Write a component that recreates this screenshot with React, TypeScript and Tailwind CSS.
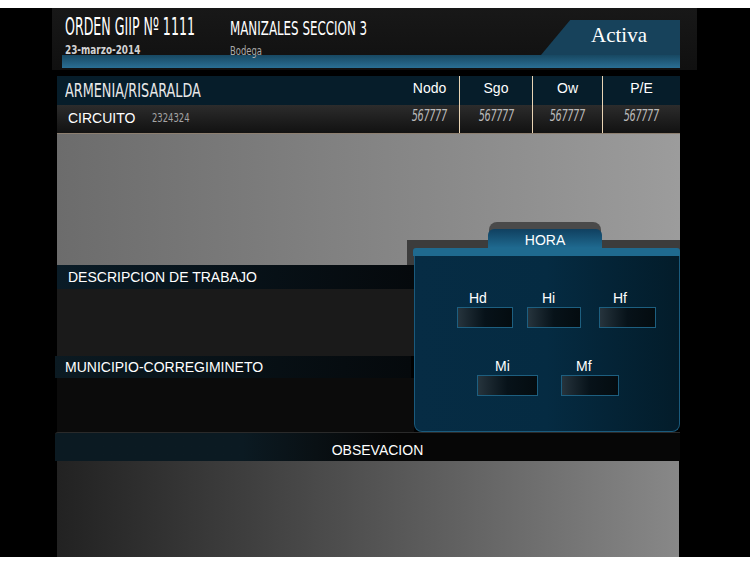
import React from "react";

const cond = "font-['DejaVu_Sans_Condensed','DejaVu_Sans',sans-serif]";
const arial = "font-['Liberation_Sans',Arial,sans-serif]";

function Squeeze({ children, className }: { children: React.ReactNode; className: string }) {
    return <span className={`inline-block origin-left whitespace-nowrap ${cond} ${className}`}>{children}</span>;
}

function Col({ label, value, w, pl }: { label: string; value: string; w: string; pl?: string }) {
    return (
        <div className={`flex flex-col ${w} ${pl ? "" : "border-l border-[#e9d4b4]"}`}>
            <div className={`h-[29px] bg-[#061d2a] flex items-center justify-center pb-[4px] ${pl ?? ""} ${arial} text-[14px] text-white`}>{label}</div>
            <div className={`h-[28px] bg-gradient-to-b from-[#2c2c2c] to-[#121212] flex items-center justify-center pb-[6px] ${pl ?? ""}`}>
                <span className={`${cond} italic text-[15px] text-[#b9b9b9] scale-x-[0.72] inline-block tracking-[-0.5px]`}>{value}</span>
            </div>
        </div>
    );
}

function TimeBox({ label, w, pl }: { label: string; w: string; pl: string }) {
    return (
        <div className="flex flex-col">
            <div className={`${arial} text-[14px] leading-[16px] text-white h-[17px] ${pl}`}>{label}</div>
            <div className={`${w} h-[21px] border border-[#1d5f80] bg-gradient-to-r from-[#26343d] via-[#071219] to-[#040c10]`}></div>
        </div>
    );
}

export default function App() {
    return (
        <div className="w-[750px] h-[580px] bg-white pt-2">
            <div className="h-[549px] bg-black pl-[52px]">
                <div className="w-[645px] flex flex-col">
                    {/* header */}
                    <div className="h-[62px] bg-gradient-to-b from-[#181818] to-[#101010] flex flex-col">
                        <div className="h-[47px] flex">
                            <div className="w-[178px] pl-[13px] pt-[6px] flex flex-col">
                                <Squeeze className="text-[25px] leading-[26px] text-white scale-x-[0.56]">ORDEN GIIP Nº 1111</Squeeze>
                                <Squeeze className="text-[13px] leading-[14px] mt-[3px] text-[#d2d2d2] scale-x-[0.76] font-bold">23-marzo-2014</Squeeze>
                            </div>
                            <div className="w-[311px] pt-[9px] flex flex-col">
                                <Squeeze className="text-[20px] leading-[22px] text-white scale-x-[0.66]">MANIZALES SECCION 3</Squeeze>
                                <Squeeze className="text-[13px] leading-[14px] mt-[5px] text-[#a9a9a9] scale-x-[0.72]">Bodega</Squeeze>
                            </div>
                            <div className="mt-auto h-[35px] w-[139px] bg-[#17425b] [clip-path:polygon(21%_0,100%_0,100%_100%,0_100%)] flex justify-end pr-[33px]">
                                <span className="font-['Liberation_Serif','DejaVu_Serif',serif] text-[21px] leading-[30px] text-white">Activa</span>
                            </div>
                        </div>
                        <div className="ml-[10px] w-[618px] h-[13px] bg-gradient-to-b from-[#174862] to-[#2b6f94]"></div>
                    </div>
                    <div className="h-[6px]"></div>

                    {/* body column */}
                    <div className="ml-[5px] w-[623px] flex flex-col">
                        <div className="flex border-b border-[#8d7f70]">
                            <div className="flex-1 flex flex-col">
                                <div className="h-[29px] bg-[#061d2a] flex items-center pl-2">
                                    <Squeeze className="text-[19px] text-[#e8e8e8] scale-x-[0.75]">ARMENIA/RISARALDA</Squeeze>
                                </div>
                                <div className="h-[28px] bg-gradient-to-b from-[#2c2c2c] to-[#121212] flex items-center pl-[11px] pb-[2px]">
                                    <span className={`${arial} text-[14px] text-white`}>CIRCUITO</span>
                                    <Squeeze className="ml-[17px] text-[12px] text-[#a5a5a5] scale-x-[0.78]">2324324</Squeeze>
                                </div>
                            </div>
                            <Col label="Nodo" value="567777" w="w-[69px]" pl="pl-[10px]" />
                            <Col label="Sgo" value="567777" w="w-[73px]" />
                            <Col label="Ow" value="567777" w="w-[70px]" />
                            <Col label="P/E" value="567777" w="w-[78px]" />
                        </div>

                        {/* gray area */}
                        <div className="h-[131px] bg-gradient-to-r from-[#6c6c6c] to-[#9c9c9c] flex flex-col">
                            <div className="flex-1"></div>
                            <div className="ml-auto w-[273px] h-[25px] bg-[#3c3c3c]"></div>
                        </div>

                        {/* middle */}
                        <div className="flex">
                            <div className="w-[357px] flex flex-col">
                                <div className={`h-[24px] bg-gradient-to-r from-[#0a1c27] to-[#05090c] flex items-center pl-[11px] ${arial} text-[14px] text-white`}>DESCRIPCION DE TRABAJO</div>
                                <div className="h-[67px] bg-[#1a1a1a]"></div>
                                <div className={`-ml-[2px] w-[356px] h-[22px] bg-gradient-to-r from-[#0b1a22] to-[#05090c] flex items-center pl-[10px] ${arial} text-[14px] text-white`}>MUNICIPIO-CORREGIMINETO</div>
                                <div className="h-[54px] bg-[#0b0b0b]"></div>
                            </div>
                            <div className="relative w-[266px] -mt-[43px] flex flex-col">
                                <div className="self-start ml-[75px] w-[112px] h-[26px] rounded-t-[8px] bg-[#4a4a4a] pt-[7px]">
                                    <div className={`h-[19px] -mx-[1px] rounded-t-[6px] bg-gradient-to-b from-[#104060] to-[#1f6a90] flex items-center justify-center pt-[3px] ${arial} text-[14px] text-white`}>HORA</div>
                                </div>
                                <div className="-ml-[1px] h-[8px] rounded-t-[3px] bg-[#1f6a8f]"></div>
                                <div className="h-[176px] rounded-b-[8px] border border-t-0 border-[#1a5a7c] bg-gradient-to-r from-[#062c44] via-[#052b42] to-[#031c2a] flex flex-col">
                                    <div className="flex pt-[34px] pl-[42px] gap-[14px]">
                                        <TimeBox label="Hd" w="w-[56px]" pl="pl-[12px]" />
                                        <TimeBox label="Hi" w="w-[54px]" pl="pl-[15px]" />
                                        <div className="ml-[4px]"><TimeBox label="Hf" w="w-[57px]" pl="pl-[14px]" /></div>
                                    </div>
                                    <div className="flex pt-[30px] pl-[62px] gap-[23px]">
                                        <TimeBox label="Mi" w="w-[61px]" pl="pl-[18px]" />
                                        <TimeBox label="Mf" w="w-[58px]" pl="pl-[15px]" />
                                    </div>
                                </div>
                            </div>
                        </div>

                        {/* observacion */}
                        <div className={`-ml-[2px] w-[625px] h-[29px] rounded-tl-[3px] border-t border-[#2a2a2a] bg-gradient-to-r from-[#0b1a22] from-30% to-[#060606] to-55% flex items-center justify-center pl-[20px] pt-[6px] ${arial} text-[14px] text-white`}>OBSEVACION</div>
                        <div className="w-[622px] h-[96px] bg-gradient-to-r from-[#222222] to-[#888888]"></div>
                    </div>
                </div>
            </div>
        </div>
    );
}
